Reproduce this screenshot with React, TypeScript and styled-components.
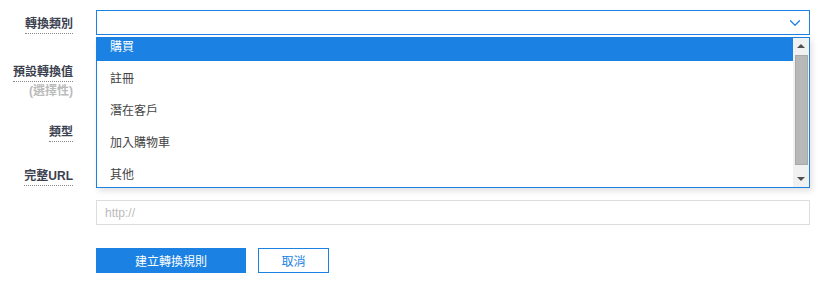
import * as React from 'react';
import styled, { createGlobalStyle } from 'styled-components';
import { ChevronDown } from 'lucide-react';

const GlobalStyle = createGlobalStyle`
  html, body { margin: 0; padding: 0; background: #fff; }
  body {
    font-family: "Liberation Sans", "Noto Sans CJK TC", sans-serif;
    font-size: 12px;
    color: #333;
  }
`;

const BLUE = '#1b82e3';

const options = ['購買', '註冊', '潛在客戶', '加入購物車', '其他'];

const App = () => {
  return (
    <>
      <GlobalStyle />
      <Form>
        <Row $gap={23}>
          <Label>
            <LabelText>轉換類別</LabelText>
          </Label>
          <Field>
            <SelectBox>
              <ChevronDown size={18} strokeWidth={1.6} color={BLUE} />
            </SelectBox>
            <Dropdown>
              <List>
                {options.map((o, i) => (
                  <Item key={o} $active={i === 0}>{o}</Item>
                ))}
              </List>
              <Scrollbar>
                <Arrow $dir="up" />
                <Track>
                  <Thumb />
                </Track>
                <Arrow $dir="down" />
              </Scrollbar>
            </Dropdown>
          </Field>
        </Row>
        <Row $gap={35}>
          <Label>
            <LabelText>預設轉換值</LabelText>
            <SubLabel>(選擇性)</SubLabel>
          </Label>
          <Field />
        </Row>
        <Row $gap={19}>
          <Label>
            <LabelText>類型</LabelText>
          </Label>
          <Field />
        </Row>
        <Row $gap={0}>
          <Label>
            <LabelText>完整URL</LabelText>
          </Label>
          <Field>
            <Spacer />
            <TextInput placeholder="http://" />
          </Field>
        </Row>
        <Actions>
          <PrimaryButton>建立轉換規則</PrimaryButton>
          <GhostButton>取消</GhostButton>
        </Actions>
      </Form>
    </>
  );
};

const Form = styled.div`
  padding: 10px 8px 0 0;
`;

const Row = styled.div<{ $gap: number }>`
  display: flex;
  gap: 23px;
  margin-bottom: ${p => p.$gap}px;
`;

const Label = styled.div`
  width: 73px;
  flex: none;
  display: flex;
  flex-direction: column;
  align-items: flex-end;
  padding-top: 7px;
  height: 25px;
  box-sizing: border-box;
`;

const LabelText = styled.span`
  font-weight: bold;
  font-size: 12px;
  line-height: 14px;
  color: #3c4150;
  padding-bottom: 2px;
  border-bottom: 1px dotted #888;
  white-space: nowrap;
`;

const SubLabel = styled.span`
  font-weight: bold;
  font-size: 12px;
  line-height: 14px;
  margin-top: 2px;
  color: #bbb;
  white-space: nowrap;
`;

const Field = styled.div`
  flex: 1;
  position: relative;
  min-height: 25px;
`;

const SelectBox = styled.div`
  height: 25px;
  box-sizing: border-box;
  border: 1px solid ${BLUE};
  display: flex;
  align-items: center;
  justify-content: flex-end;
  padding-right: 5px;
`;

const Dropdown = styled.div`
  position: absolute;
  top: 27px;
  left: 0;
  right: 0;
  height: 151px;
  box-sizing: border-box;
  border: 1px solid ${BLUE};
  background: #fff;
  box-shadow: 2px 3px 6px rgba(0, 0, 0, 0.12);
  display: flex;
  overflow: hidden;
  z-index: 5;
`;

const List = styled.div`
  flex: 1;
  margin-top: -9px;
`;

const Item = styled.div<{ $active?: boolean }>`
  height: 32px;
  display: flex;
  align-items: center;
  padding-left: 13px;
  font-size: 12px;
  font-family: "Noto Sans CJK TC", sans-serif;
  background: ${p => (p.$active ? BLUE : '#fff')};
  color: ${p => (p.$active ? '#fff' : '#444')};
`;

const Scrollbar = styled.div`
  width: 16px;
  flex: none;
  background: #f1f1f1;
  display: flex;
  flex-direction: column;
  align-items: center;
`;

const Arrow = styled.div<{ $dir: 'up' | 'down' }>`
  height: 20px;
  width: 16px;
  display: flex;
  align-items: center;
  justify-content: center;
  &::before {
    content: '';
    border-left: 4px solid transparent;
    border-right: 4px solid transparent;
    ${p =>
      p.$dir === 'up'
        ? 'border-bottom: 4px solid #505050;'
        : 'border-top: 4px solid #505050;'}
  }
`;

const Track = styled.div`
  flex: 1;
  width: 100%;
  display: flex;
  justify-content: center;
  padding: 1px 0 7px;
  box-sizing: border-box;
`;

const Thumb = styled.div`
  width: 13px;
  height: 110px;
  box-sizing: border-box;
  background: #b8b8b8;
  border: 1px solid #a8a8a8;
`;

const Spacer = styled.div`
  height: 38px;
`;

const TextInput = styled.input`
  display: block;
  width: 100%;
  height: 25px;
  box-sizing: border-box;
  border: 1px solid #ddd;
  padding: 0 8px;
  font-family: "Liberation Sans", sans-serif;
  font-size: 12px;
  outline: none;
  &::placeholder { color: #bbb; }
`;

const Actions = styled.div`
  display: flex;
  gap: 12px;
  margin: 23px 0 0 96px;
`;

const PrimaryButton = styled.button`
  width: 150px;
  height: 25px;
  border: 1px solid ${BLUE};
  background: ${BLUE};
  color: #fff;
  font-family: "Noto Sans CJK TC", sans-serif;
  font-size: 12px;
  padding: 0;
`;

const GhostButton = styled(PrimaryButton)`
  width: 71px;
  background: #fff;
  color: ${BLUE};
`;

export default App;
